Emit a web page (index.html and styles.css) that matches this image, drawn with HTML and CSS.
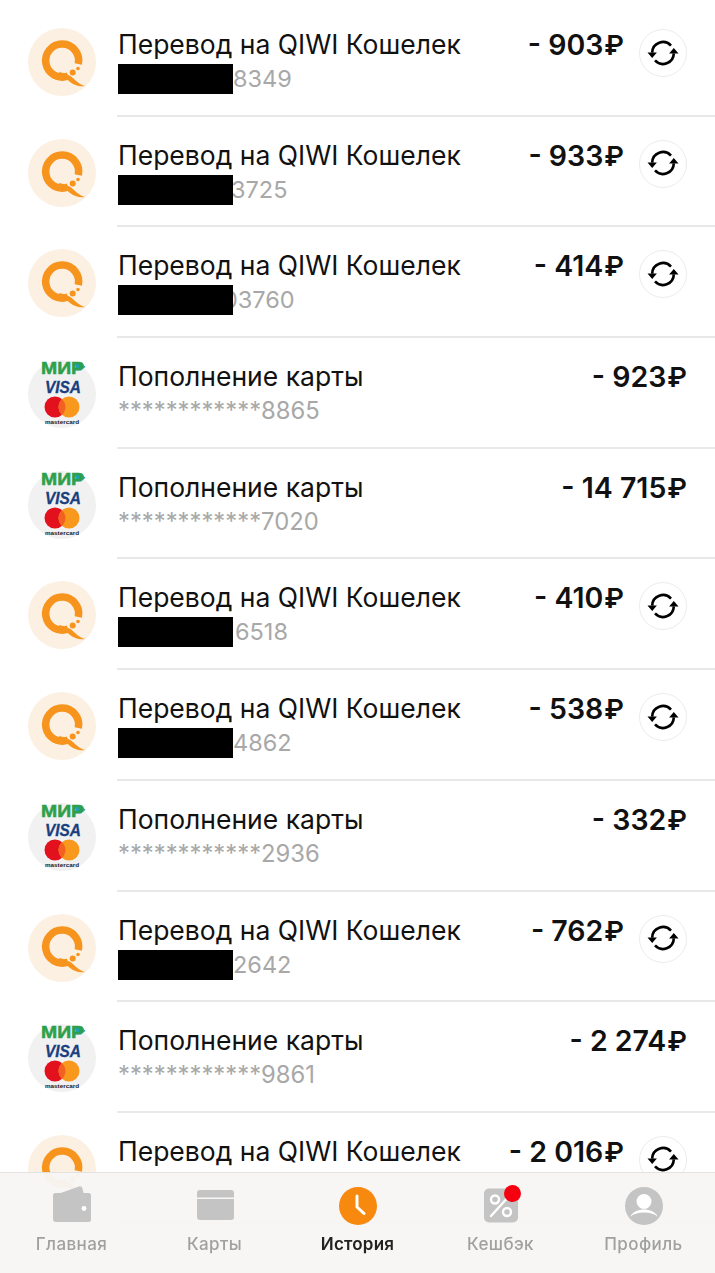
FILE: index.html
```html
<!DOCTYPE html>
<html lang="ru">
<head>
  <meta charset="UTF-8">
  <meta name="viewport" content="width=device-width, initial-scale=1.0">
  <title>История</title>
  <link rel="stylesheet" href="styles.css">
</head>
<body>
  <svg class="defs" width="0" height="0" aria-hidden="true">
    <symbol id="qiwi" viewBox="0 0 68 68">
      <circle cx="34" cy="34" r="34" fill="#fcf0e3"/>
      <path d="M40 48A16.500 16.500 0 1 1 50.300 36" fill="none" stroke="#f7941d" stroke-width="7.500"/>
      <path d="M31 44c6 1 11 3 15 7 3 3 7 6 11 7-6 1-11-1-15-4-3-3-7-6-11-6z" fill="#f7941d"/>
      <circle cx="44.700" cy="44.500" r="3" fill="#f7941d"/>
      <circle cx="50" cy="40.500" r="1.800" fill="#f7941d"/>
    </symbol>
    <symbol id="cardlogos" viewBox="0 0 68 68">
      <circle cx="34" cy="34" r="34" fill="#f1f1f2"/>
      <path d="M45 3h8l4.500 3.800-4.500 3.700h-8l3-3.700z" fill="#1f9fb0"/>
      <circle cx="27" cy="47" r="10.500" fill="#e3101e"/>
      <circle cx="41" cy="47" r="10.500" fill="#f8991d"/>
      <path d="M34 39.200a10.500 10.500 0 0 1 0 15.600 10.500 10.500 0 0 1 0-15.600z" fill="#f26122"/>
    </symbol>
    <symbol id="repeat" viewBox="0 0 48 48">
      <path d="M13.200 23.600a10.800 10.800 0 0 1 18.800-7" fill="none" stroke="#000" stroke-width="2.600"/>
      <path d="M34.800 24.400a10.800 10.800 0 0 1-18.800 7" fill="none" stroke="#000" stroke-width="2.600"/>
      <path d="M8.500 23.500h9.400l-4.700 5.500zM30.100 24.500h9.400l-4.700-5.500z" fill="#000"/>
    </symbol>
  </svg>

  <div class="list">
    <div class="row">
      <svg class="avatar"><use href="#qiwi"/></svg>
      <div class="info">
        <div class="title">Перевод на QIWI Кошелек</div>
        <div class="sub"><span class="mask"></span><span class="num">8349</span></div>
      </div>
      <div class="amount">- 903<span class="rub">₽</span></div>
      <div class="repeat"><svg><use href="#repeat"/></svg></div>
    </div>
    <div class="row">
      <svg class="avatar"><use href="#qiwi"/></svg>
      <div class="info">
        <div class="title">Перевод на QIWI Кошелек</div>
        <div class="sub"><span class="mask"></span><span class="num tight">3725</span></div>
      </div>
      <div class="amount">- 933<span class="rub">₽</span></div>
      <div class="repeat"><svg><use href="#repeat"/></svg></div>
    </div>
    <div class="row">
      <svg class="avatar"><use href="#qiwi"/></svg>
      <div class="info">
        <div class="title">Перевод на QIWI Кошелек</div>
        <div class="sub"><span class="mask"></span><span class="num cut">03760</span></div>
      </div>
      <div class="amount">- 414<span class="rub">₽</span></div>
      <div class="repeat"><svg><use href="#repeat"/></svg></div>
    </div>
    <div class="row">
      <svg class="avatar" viewBox="0 0 68 68">
        <use href="#cardlogos"/>
        <text x="13" y="14" class="mir" textLength="43" lengthAdjust="spacingAndGlyphs">МИР</text>
        <text x="17" y="33" class="visa" textLength="36" lengthAdjust="spacingAndGlyphs">VISA</text>
        <text x="17" y="64" class="mc" textLength="34" lengthAdjust="spacingAndGlyphs">mastercard</text>
      </svg>
      <div class="info">
        <div class="title">Пополнение карты</div>
        <div class="sub stars">************8865</div>
      </div>
      <div class="amount">- 923<span class="rub">₽</span></div>
    </div>
    <div class="row">
      <svg class="avatar" viewBox="0 0 68 68">
        <use href="#cardlogos"/>
        <text x="13" y="14" class="mir" textLength="43" lengthAdjust="spacingAndGlyphs">МИР</text>
        <text x="17" y="33" class="visa" textLength="36" lengthAdjust="spacingAndGlyphs">VISA</text>
        <text x="17" y="64" class="mc" textLength="34" lengthAdjust="spacingAndGlyphs">mastercard</text>
      </svg>
      <div class="info">
        <div class="title">Пополнение карты</div>
        <div class="sub stars">************7020</div>
      </div>
      <div class="amount">- 14 715<span class="rub">₽</span></div>
    </div>
    <div class="row">
      <svg class="avatar"><use href="#qiwi"/></svg>
      <div class="info">
        <div class="title">Перевод на QIWI Кошелек</div>
        <div class="sub"><span class="mask"></span><span class="num wide">6518</span></div>
      </div>
      <div class="amount">- 410<span class="rub">₽</span></div>
      <div class="repeat"><svg><use href="#repeat"/></svg></div>
    </div>
    <div class="row">
      <svg class="avatar"><use href="#qiwi"/></svg>
      <div class="info">
        <div class="title">Перевод на QIWI Кошелек</div>
        <div class="sub"><span class="mask"></span><span class="num">4862</span></div>
      </div>
      <div class="amount">- 538<span class="rub">₽</span></div>
      <div class="repeat"><svg><use href="#repeat"/></svg></div>
    </div>
    <div class="row">
      <svg class="avatar" viewBox="0 0 68 68">
        <use href="#cardlogos"/>
        <text x="13" y="14" class="mir" textLength="43" lengthAdjust="spacingAndGlyphs">МИР</text>
        <text x="17" y="33" class="visa" textLength="36" lengthAdjust="spacingAndGlyphs">VISA</text>
        <text x="17" y="64" class="mc" textLength="34" lengthAdjust="spacingAndGlyphs">mastercard</text>
      </svg>
      <div class="info">
        <div class="title">Пополнение карты</div>
        <div class="sub stars">************2936</div>
      </div>
      <div class="amount">- 332<span class="rub">₽</span></div>
    </div>
    <div class="row">
      <svg class="avatar"><use href="#qiwi"/></svg>
      <div class="info">
        <div class="title">Перевод на QIWI Кошелек</div>
        <div class="sub"><span class="mask"></span><span class="num">2642</span></div>
      </div>
      <div class="amount">- 762<span class="rub">₽</span></div>
      <div class="repeat"><svg><use href="#repeat"/></svg></div>
    </div>
    <div class="row">
      <svg class="avatar" viewBox="0 0 68 68">
        <use href="#cardlogos"/>
        <text x="13" y="14" class="mir" textLength="43" lengthAdjust="spacingAndGlyphs">МИР</text>
        <text x="17" y="33" class="visa" textLength="36" lengthAdjust="spacingAndGlyphs">VISA</text>
        <text x="17" y="64" class="mc" textLength="34" lengthAdjust="spacingAndGlyphs">mastercard</text>
      </svg>
      <div class="info">
        <div class="title">Пополнение карты</div>
        <div class="sub stars">************9861</div>
      </div>
      <div class="amount">- 2 274<span class="rub">₽</span></div>
    </div>
    <div class="row">
      <svg class="avatar"><use href="#qiwi"/></svg>
      <div class="info">
        <div class="title">Перевод на QIWI Кошелек</div>
      </div>
      <div class="amount">- 2 016<span class="rub">₽</span></div>
      <div class="repeat"><svg><use href="#repeat"/></svg></div>
    </div>
  </div>

  <nav class="tabbar">
    <div class="tab">
      <svg viewBox="0 0 40 40">
        <path d="M3 9 27 .5c1.800-.5 3 .3 3.400 2L32 9z" fill="#c4c4c4"/>
        <path d="M3.500 7H36.500a2.500 2.500 0 0 1 2.500 2.500v24a2.500 2.500 0 0 1-2.500 2.500H4a3 3 0 0 1-3-3V9.500A2.500 2.500 0 0 1 3.500 7z" fill="#c4c4c4"/>
        <circle cx="32" cy="22.500" r="2.400" fill="#fff"/>
      </svg>
      <span>Главная</span>
    </div>
    <div class="tab">
      <svg viewBox="0 0 40 40">
        <path d="M2 7a3 3 0 0 1 3-3h31a3 3 0 0 1 3 3v4.500H2z" fill="#c4c4c4"/>
        <path d="M2 13h37v18a3 3 0 0 1-3 3H5a3 3 0 0 1-3-3z" fill="#c4c4c4"/>
      </svg>
      <span>Карты</span>
    </div>
    <div class="tab active">
      <svg viewBox="0 0 40 40">
        <circle cx="20" cy="20" r="19" fill="#f7890f"/>
        <path d="M19 10v11l7 6.500" fill="none" stroke="#fff" stroke-width="3" stroke-linecap="round" stroke-linejoin="round"/>
      </svg>
      <span>История</span>
    </div>
    <div class="tab">
      <svg viewBox="0 0 40 40">
        <rect x="3" y="2.500" width="34" height="34" rx="5" fill="#c4c4c4"/>
        <circle cx="14" cy="13.500" r="4" fill="none" stroke="#fff" stroke-width="2.400"/>
        <circle cx="26" cy="26" r="4" fill="none" stroke="#fff" stroke-width="2.400"/>
        <path d="M10 30 29 9" stroke="#fff" stroke-width="2.400" stroke-linecap="round"/>
      </svg>
      <span class="dot"></span>
      <span>Кешбэк</span>
    </div>
    <div class="tab">
      <svg viewBox="0 0 40 40">
        <circle cx="20" cy="20" r="19" fill="#c4c4c4"/>
        <circle cx="20" cy="15.500" r="7.500" fill="#fff"/>
        <path d="M6 31c3-5.500 8-7.500 14-7.500S31 25.500 34 31c-3-3-8-4.500-14-4.500S9 28 6 31z" fill="#fff"/>
      </svg>
      <span>Профиль</span>
    </div>
  </nav>
</body>
</html>
```
FILE: styles.css
```css
* {
  box-sizing: border-box;
}
body {
  margin: 0;
  background: #fff;
  font-family: Inter, "Liberation Sans", sans-serif;
  color: #111;
  overflow: hidden;
}
.defs {
  position: absolute;
}
.list {
  padding-top: 6px;
}
.row {
  height: 110.7px;
  display: flex;
  align-items: flex-start;
  padding: 22px 28px 0;
  position: relative;
}
.row::after {
  content: "";
  position: absolute;
  left: 117px;
  right: 0;
  bottom: 0;
  height: 2px;
  background: #e8e8e8;
}
.avatar {
  width: 68px;
  height: 68px;
  flex: none;
}
.mir {
  font: 700 16px "Liberation Sans", sans-serif;
  fill: #2fa04a;
  stroke: #2fa04a;
  stroke-width: 0.5px;
}
.visa {
  font: italic 700 16.5px "Liberation Sans", sans-serif;
  fill: #1a3f7e;
  stroke: #1a3f7e;
  stroke-width: 0.3px;
}
.mc {
  font: 700 6px "Liberation Sans", sans-serif;
  fill: #222;
}
.info {
  margin-left: 22px;
  flex: 1;
  min-width: 0;
}
.title {
  margin-top: -1px;
  font-size: 26.5px;
  line-height: 34px;
  white-space: nowrap;
}
.sub {
  display: flex;
  height: 30px;
  margin-top: 3px;
  font-size: 23.5px;
  line-height: 30px;
  color: #a8a8a8;
  white-space: nowrap;
}
.sub.stars {
  font-size: 23.8px;
}
.mask {
  flex: none;
  width: 115px;
  height: 30px;
  background: #000;
  position: relative;
  z-index: 1;
}
.num.cut {
  margin-left: -10px;
}
.num.tight {
  margin-left: -2px;
}
.num.wide {
  margin-left: 2px;
}
.amount {
  flex: none;
  font-size: 28.5px;
  font-weight: 600;
  line-height: 34px;
  white-space: nowrap;
}
.rub {
  margin-left: 1px;
  font-size: 27px;
  font-weight: 600;
}
.repeat {
  flex: none;
  width: 48px;
  height: 48px;
  margin: 1px 0 0 15px;
  border: 1.5px solid #ececec;
  border-radius: 50%;
  background: #fff;
}
.repeat svg {
  display: block;
  width: 48px;
  height: 48px;
  margin: -1.5px;
}
.tabbar {
  position: fixed;
  z-index: 2;
  left: 0;
  right: 0;
  bottom: 0;
  height: 101px;
  display: grid;
  grid-template-columns: repeat(5, 1fr);
  background: rgba(247, 246, 245, 0.96);
  border-top: 1.5px solid #e2e2e2;
}
.tab {
  display: flex;
  flex-direction: column;
  align-items: center;
  padding-top: 13px;
  position: relative;
  font-size: 17px;
  font-weight: 500;
  letter-spacing: 0.4px;
  color: #a0a0a0;
}
.tab svg {
  width: 40px;
  height: 40px;
}
.tab span:last-child {
  margin-top: 8px;
  line-height: 20px;
}
.tab.active {
  color: #222;
  font-weight: 600;
  letter-spacing: 0.2px;
}
.dot {
  position: absolute;
  top: 11.5px;
  left: 74.5px;
  width: 17px;
  height: 17px;
  border-radius: 50%;
  background: #f6000f;
}
```
